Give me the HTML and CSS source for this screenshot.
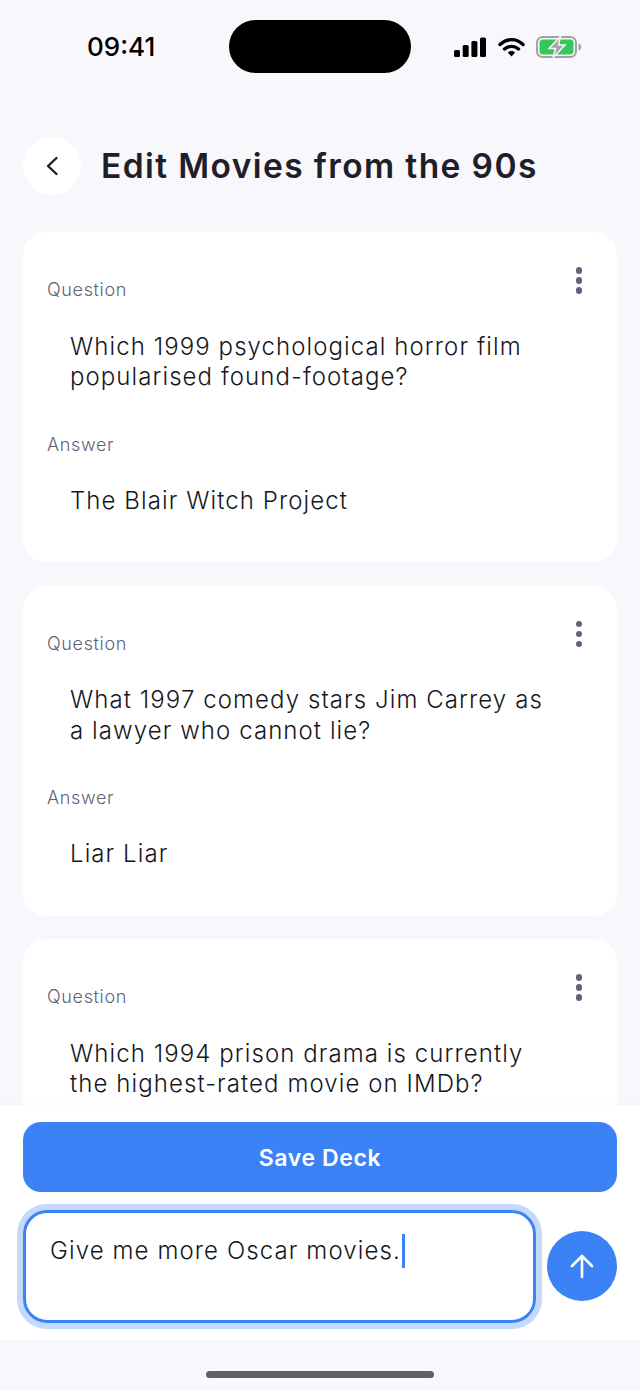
FILE: index.html
```html
<!DOCTYPE html>
<html lang="en">
<head>
    <meta charset="UTF-8">
    <meta name="viewport" content="width=device-width, initial-scale=1.0">
    <title>Edit Movies from the 90s</title>
    <link rel="stylesheet" href="styles.css">
</head>

<body>
    <div class="status-bar">
        <span class="time">09:41</span>
        <div class="island"></div>
        <div class="status-icons">
            <svg width="32" height="20" viewBox="0 0 32 20"><rect x="0" y="13" width="6" height="7" rx="1.5"/><rect x="8.700" y="8" width="6" height="12" rx="1.5"/><rect x="17.400" y="4" width="6" height="16" rx="1.5"/><rect x="26" y="0.500" width="6" height="19.500" rx="1.5"/></svg>
            <svg width="27" height="20" viewBox="0 0 27 20"><path d="M2 7.500C9 1 18 1 25 7.500M6.500 12C10.500 8.500 16.500 8.500 20.500 12" fill="none" stroke="#000" stroke-width="3.400" stroke-linecap="round"/><path d="M9.800 15.500C12 13.400 15 13.400 17.200 15.500L13.500 19.600Z"/></svg>
            <svg width="46" height="22" viewBox="0 0 46 22"><rect x="1" y="1" width="39" height="20" rx="5.500" fill="none" stroke="#a3a3a6" stroke-width="2"/><rect x="3.500" y="3.500" width="34" height="15" rx="3.500" fill="#34c759"/><path d="M42.500 7.500c1.800.5 2.800 2 2.800 3.500s-1 3-2.800 3.500z" fill="#a3a3a6"/><path d="M24.500 0.500L13 12.500h6.500L17 21.500l12-12.500h-6.500z" fill="#a3a3a6" stroke="#f7f7fc" stroke-width="1.500"/></svg>
        </div>
    </div>

    <header class="top">
        <a class="back" href="#">
            <svg width="14" height="20" viewBox="0 0 14 20"><path d="M11.500 2L3 10l8.500 8" fill="none" stroke="#1f2027" stroke-width="2.400" stroke-linecap="round" stroke-linejoin="round"/></svg>
        </a>
        <h1>Edit Movies from the 90s</h1>
    </header>

    <main class="cards">
        <section class="card">
            <div class="card-head">
                <span class="label">Question</span>
                <span class="dots"><i></i><i></i><i></i></span>
            </div>
            <p class="field">Which 1999 psychological horror film<br>popularised found-footage?</p>
            <span class="label">Answer</span>
            <p class="field">The Blair Witch Project</p>
        </section>

        <section class="card">
            <div class="card-head">
                <span class="label">Question</span>
                <span class="dots"><i></i><i></i><i></i></span>
            </div>
            <p class="field">What 1997 comedy stars Jim Carrey as<br>a lawyer who cannot lie?</p>
            <span class="label">Answer</span>
            <p class="field">Liar Liar</p>
        </section>

        <section class="card">
            <div class="card-head">
                <span class="label">Question</span>
                <span class="dots"><i></i><i></i><i></i></span>
            </div>
            <p class="field">Which 1994 prison drama is currently<br>the highest-rated movie on IMDb?</p>
        </section>
    </main>

    <div class="composer">
        <button class="save">Save Deck</button>
        <div class="prompt-row">
            <div class="prompt">Give me more Oscar movies.<span class="caret"></span></div>
            <button class="send">
                <svg width="26" height="26" viewBox="0 0 26 26"><path d="M13 24V3M3 13L13 3l10 10" fill="none" stroke="#fff" stroke-width="2.600" stroke-linecap="round" stroke-linejoin="round"/></svg>
            </button>
        </div>
    </div>

    <div class="home-area"><div class="home-bar"></div></div>
</body>
</html>
```

FILE: styles.css
```css
html,
body {
    height: 100%;
}

body {
    margin: 0;
    height: 1390px;
    display: flex;
    flex-direction: column;
    overflow: hidden;
    background: #f7f7fc;
    color: #1f2027;
    font-family: 'Inter', sans-serif;
}

.status-bar {
    flex: none;
    height: 53px;
    padding: 20px 58px 0 87px;
    display: flex;
    align-items: center;
}

.time {
    font-size: 26px;
    font-weight: 500;
    color: #000;
    width: 142px;
}

.island {
    width: 182px;
    height: 53px;
    border-radius: 27px;
    background: #000;
}

.status-icons {
    display: flex;
    align-items: center;
    gap: 11.500px;
    margin-left: auto;
}

.status-icons svg {
    display: block;
}

.top {
    flex: none;
    display: flex;
    align-items: center;
    gap: 20px;
    margin: 64px 23px 37px;
}

.back {
    width: 58px;
    height: 58px;
    border-radius: 50%;
    background: #fff;
    display: flex;
    align-items: center;
    justify-content: center;
}

.top h1 {
    margin: 0;
    font-size: 33.500px;
    font-weight: 600;
    letter-spacing: 1.400px;
    color: #1f2027;
}

.cards {
    flex: 1;
    min-height: 0;
    overflow: hidden;
    padding: 0 23px;
}

.card {
    background: #fff;
    border-radius: 23px;
    height: 330px;
    box-sizing: border-box;
    padding: 34px 24px 0;
    margin-bottom: 23.500px;
}

.card-head {
    display: flex;
    justify-content: space-between;
    align-items: flex-start;
    height: 48.500px;
}

.label {
    display: block;
    font-size: 18px;
    line-height: 48px;
    font-weight: 300;
    letter-spacing: 0.650px;
    color: #60647a;
}

.dots {
    display: flex;
    flex-direction: column;
    gap: 3.500px;
    margin: 1px 11px 0 0;
}

.dots i {
    width: 6.500px;
    height: 6.500px;
    border-radius: 50%;
    background: #60647a;
}

.field {
    margin: 0 0 28px;
    padding: 17px 23px 0;
    font-size: 24px;
    line-height: 30.500px;
    font-weight: 300;
    color: #16171d;
    letter-spacing: 1.080px;
}

.composer {
    flex: none;
    height: 235px;
    box-sizing: border-box;
    padding: 17px 23px 0;
    background: #fff;
    box-shadow: 0 0 8px rgba(0, 0, 0, 0.03);
    position: relative;
}

.save {
    display: block;
    width: 100%;
    height: 70px;
    padding: 2px 0 0;
    border: 0;
    border-radius: 18px;
    background: #3b82f6;
    color: #fff;
    font-family: inherit;
    font-size: 23px;
    font-weight: 600;
    letter-spacing: 0.600px;
}

.prompt-row {
    display: flex;
    align-items: center;
    gap: 11px;
    margin-top: 18px;
}

.prompt {
    flex: 1;
    height: 113px;
    box-sizing: border-box;
    padding: 21px 24px;
    border: 3px solid #3b82f6;
    border-radius: 24px;
    box-shadow: 0 0 0 6px #c4d9fc;
    font-size: 24px;
    line-height: 30px;
    font-weight: 300;
    color: #16171d;
    letter-spacing: 1.100px;
}

.caret {
    display: inline-block;
    width: 3px;
    height: 34px;
    margin-left: 1px;
    vertical-align: -9px;
    background: #3b82f6;
}

.send {
    flex: none;
    width: 70px;
    height: 70px;
    margin-bottom: 1px;
    padding: 0;
    border: 0;
    border-radius: 50%;
    background: #3b82f6;
    display: flex;
    align-items: center;
    justify-content: center;
}

.home-area {
    flex: none;
    height: 50px;
    display: flex;
    justify-content: center;
    align-items: flex-end;
}

.home-bar {
    width: 228px;
    height: 7px;
    margin-bottom: 12px;
    border-radius: 4px;
    background: #5f6063;
}
```
